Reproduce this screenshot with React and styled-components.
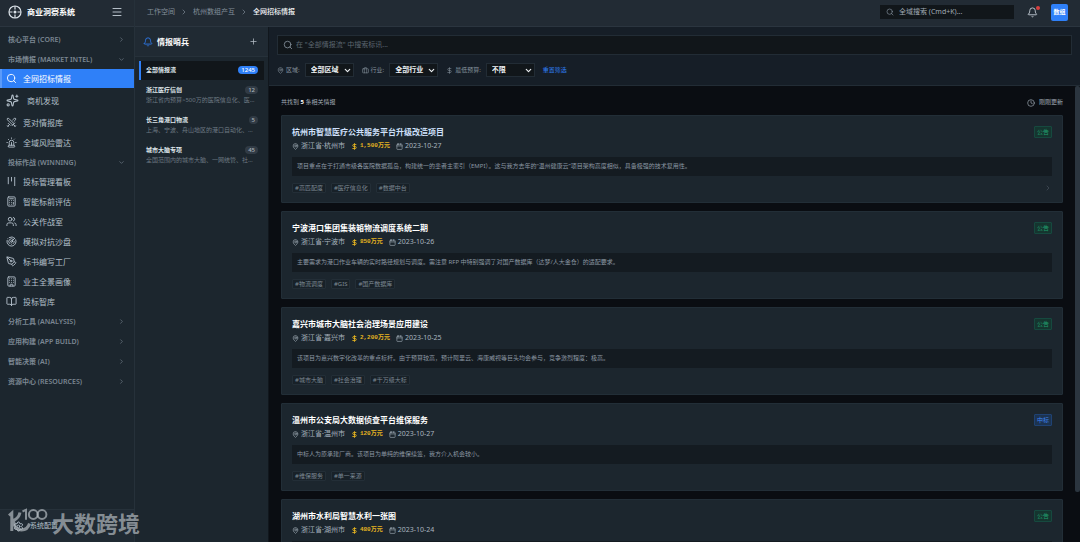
import { useState } from "react";
import styled, { createGlobalStyle, css } from "styled-components";
import {
  Bell,
  BookOpen,
  Briefcase,
  Building,
  Calculator,
  Calendar,
  ChevronDown,
  ChevronRight,
  Clock,
  DollarSign,
  Kanban,
  MapPin,
  Menu,
  PenTool,
  Plus,
  Radar,
  Search,
  Settings,
  Siren,
  Sparkles,
  Swords,
  Users,
} from "lucide-react";

const NAV = [
  { title: "核心平台 (CORE)" },
  {
    title: "市场情报 (MARKET INTEL)",
    items: [
      { label: "全网招标情报", icon: Search },
      { label: "商机发现", icon: Sparkles, large: true },
      { label: "竞对情报库", icon: Swords },
      { label: "全域风险雷达", icon: Siren },
    ],
  },
  {
    title: "投标作战 (WINNING)",
    items: [
      { label: "投标管理看板", icon: Kanban },
      { label: "智能标前评估", icon: Calculator },
      { label: "公关作战室", icon: Users },
      { label: "模拟对抗沙盘", icon: Radar },
      { label: "标书编写工厂", icon: PenTool },
      { label: "业主全景画像", icon: Building },
      { label: "投标智库", icon: BookOpen },
    ],
  },
  { title: "分析工具 (ANALYSIS)" },
  { title: "应用构建 (APP BUILD)" },
  { title: "智能决策 (AI)" },
  { title: "资源中心 (RESOURCES)" },
];

const FEEDS = [
  { name: "全部情报流", count: 1245 },
  { name: "浙江医疗信创", count: 12, desc: "浙江省内预算>500万的医院信息化、医疗信创项目" },
  { name: "长三角港口物流", count: 5, desc: "上海、宁波、舟山地区的港口自动化、物流调度" },
  { name: "城市大脑专项", count: 45, desc: "全国范围内的城市大脑、一网统管、社会治理" },
];

const BIDS = [
  {
    title: "杭州市智慧医疗公共服务平台升级改造项目",
    place: "浙江省·杭州市",
    price: "1,500万元",
    date: "2023-10-27",
    kind: "公告",
    hot: true,
    summary:
      "项目重点在于打通市级各医院数据孤岛，构建统一的患者主索引（EMPI）。这与我方去年的“温州健康云”项目架构高度相似，具备极强的技术复用性。",
    tags: ["#高匹配度", "#医疗信息化", "#数据中台"],
  },
  {
    title: "宁波港口集团集装箱物流调度系统二期",
    place: "浙江省·宁波市",
    price: "850万元",
    date: "2023-10-26",
    kind: "公告",
    summary:
      "主要需求为港口作业车辆的实时路径规划与调度。需注意 RFP 中特别强调了对国产数据库（达梦/人大金仓）的适配要求。",
    tags: ["#物流调度", "#GIS", "#国产数据库"],
  },
  {
    title: "嘉兴市城市大脑社会治理场景应用建设",
    place: "浙江省·嘉兴市",
    price: "2,200万元",
    date: "2023-10-25",
    kind: "公告",
    summary:
      "该项目为嘉兴数字化改革的重点标杆。由于预算较高，预计阿里云、海康威视等巨头均会参与，竞争激烈程度：极高。",
    tags: ["#城市大脑", "#社会治理", "#千万级大标"],
  },
  {
    title: "温州市公安局大数据侦查平台维保服务",
    place: "浙江省·温州市",
    price: "120万元",
    date: "2023-10-27",
    kind: "中标",
    summary: "中标人为原承建厂商。该项目为单纯的维保续签，我方介入机会较小。",
    tags: ["#维保服务", "#单一来源"],
  },
  {
    title: "湖州市水利局智慧水利一张图",
    place: "浙江省·湖州市",
    price: "480万元",
    date: "2023-10-24",
    kind: "公告",
    summary: "建设全市水利一张图平台，整合水文监测与防汛调度数据。",
    tags: ["#智慧水利", "#一张图"],
  },
];

const App = () => {
  const [page, setPage] = useState("全网招标情报");
  const [feed, setFeed] = useState("全部情报流");

  return (
    <Shell>
      <GlobalStyle />
      <Sidebar>
        <Brand>
          <Logo />
          <h1>商业洞察系统</h1>
          <IconButton aria-label="菜单">
            <Menu size={12} />
          </IconButton>
        </Brand>
        <Nav>
          {NAV.map((group) => (
            <section key={group.title}>
              <GroupButton aria-expanded={!!group.items}>
                {group.title}
                {group.items ? <ChevronDown size={7} /> : <ChevronRight size={7} />}
              </GroupButton>
              {group.items && (
                <NavList>
                  {group.items.map(({ label, icon: Icon, large }) => (
                    <NavItem
                      key={label}
                      $active={page === label}
                      $large={large}
                      onClick={() => setPage(label)}
                    >
                      <Icon size={large ? 13 : 11} strokeWidth={2} />
                      {label}
                    </NavItem>
                  ))}
                </NavList>
              )}
            </section>
          ))}
        </Nav>
        <SidebarFooter>
          <Settings size={11} />
          系统配置
        </SidebarFooter>
      </Sidebar>

      <Body>
        <Header>
          <Crumbs>
            <a href="#space">工作空间</a>
            <ChevronRight size={8} />
            <a href="#org">杭州数组产互</a>
            <ChevronRight size={8} />
            <strong>全网招标情报</strong>
          </Crumbs>
          <GlobalSearch>
            <Search size={8} />
            <input aria-label="全域搜索" placeholder="全域搜索 (Cmd+K)..." />
          </GlobalSearch>
          <BellButton aria-label="通知">
            <Bell size={11} />
            <Dot />
          </BellButton>
          <Avatar>数组</Avatar>
        </Header>

        <Columns>
          <FeedPanel>
            <FeedHeader>
              <Bell size={10} />
              <h2>情报哨兵</h2>
              <IconButton aria-label="新增">
                <Plus size={9} />
              </IconButton>
            </FeedHeader>
            <FeedList>
              {FEEDS.map((f) => (
                <FeedItem key={f.name} $active={feed === f.name} onClick={() => setFeed(f.name)}>
                  <FeedTop>
                    {f.name}
                    <Count $active={feed === f.name}>{f.count}</Count>
                  </FeedTop>
                  {f.desc && <FeedDesc>{f.desc}</FeedDesc>}
                </FeedItem>
              ))}
            </FeedList>
          </FeedPanel>

          <Main>
            <Toolbar>
              <SearchBox>
                <Search size={10} />
                <input aria-label="搜索标讯" placeholder={'在 "全部情报流" 中搜索标讯...'} />
              </SearchBox>
              <Filters>
                <Filter>
                  <MapPin size={7} />
                  区域:
                  <Select options={["全部区域", "浙江省", "上海市"]} />
                </Filter>
                <Filter>
                  <Briefcase size={7} />
                  行业:
                  <Select options={["全部行业", "医疗", "政务"]} />
                </Filter>
                <Filter>
                  <DollarSign size={7} />
                  最低预算:
                  <Select options={["不限", "100万", "500万"]} />
                </Filter>
                <ResetButton>重置筛选</ResetButton>
              </Filters>
            </Toolbar>

            <Results>
              <ResultsInner>
                <Summary>
                  <span>
                    共找到 <b>5</b> 条相关情报
                  </span>
                  <Updated>
                    <Clock size={8} />
                    刚刚更新
                  </Updated>
                </Summary>
                {BIDS.map((bid) => (
                  <BidCard key={bid.title} bid={bid} />
                ))}
              </ResultsInner>
              <Scrollbar />
            </Results>
          </Main>
        </Columns>
      </Body>
      <Watermark />
    </Shell>
  );
};

export default App;

const Select = ({ options }) => (
  <SelectBox>
    <select>
      {options.map((o) => (
        <option key={o}>{o}</option>
      ))}
    </select>
    <ChevronDown size={9} strokeWidth={3} />
  </SelectBox>
);

const BidCard = ({ bid }) => (
  <Card>
    <CardTop>
      <CardTitle $hot={bid.hot}>{bid.title}</CardTitle>
      <Kind $won={bid.kind === "中标"}>{bid.kind}</Kind>
    </CardTop>
    <Meta>
      <span>
        <MapPin size={7} />
        {bid.place}
      </span>
      <Price>
        <DollarSign size={7} strokeWidth={3} />
        {bid.price}
      </Price>
      <span>
        <Calendar size={7} />
        {bid.date}
      </span>
    </Meta>
    <Excerpt>{bid.summary}</Excerpt>
    <Tags>
      {bid.tags.map((t) => (
        <Tag key={t}>{t}</Tag>
      ))}
      {bid.hot && <ChevronRight size={8} />}
    </Tags>
  </Card>
);

const Logo = () => (
  <svg width="14" height="14" viewBox="0 0 28 28" fill="none" stroke="#dbe2e8" strokeWidth="2.4">
    <circle cx="14" cy="14" r="12" />
    <path d="M14 2v7M14 19v7M2 14h7M19 14h7" />
    <circle cx="14" cy="14" r="3" fill="#dbe2e8" stroke="none" />
  </svg>
);

const Watermark = () => (
  <WatermarkBox>
    <svg width="40" height="30" viewBox="0 0 40 30" fill="none" stroke="currentColor">
      <path
        d="M1 7.5L3.8 5v18M12 4.5C11 9 9 11 5.5 12.5C6 19 9 22 13.5 22C18 22 20.5 19 21.5 15.5"
        strokeWidth="3"
      />
      <path d="M14.5 3.5L18 1.8v10" strokeWidth="2" />
      <circle cx="25.3" cy="6.5" r="4.4" strokeWidth="2" />
      <circle cx="34" cy="6.5" r="4.4" strokeWidth="2" />
    </svg>
    大数跨境
  </WatermarkBox>
);

const GlobalStyle = createGlobalStyle`
  * {
    box-sizing: border-box;
  }

  body {
    margin: 0;
    background: #0a0d12;
    color: #c3ccd4;
    font-family: "Noto Sans", "Noto Sans CJK SC", sans-serif;
    font-size: 7px;
    line-height: 10px;
  }

  h1, h2, h3, p {
    margin: 0;
  }

  button, input, select {
    font: inherit;
    color: inherit;
    border: 0;
    padding: 0;
    background: none;
  }

  button {
    cursor: pointer;
  }

  input {
    outline: none;
  }

  svg {
    display: block;
    flex-shrink: 0;
  }
`;

const Shell = styled.div`
  display: flex;
  height: 100vh;
  overflow: hidden;
`;

const Sidebar = styled.aside`
  display: flex;
  flex-direction: column;
  width: 135px;
  flex-shrink: 0;
  background: #1c262e;
  border-right: 1px solid #26313a;
`;

const Brand = styled.div`
  display: flex;
  align-items: center;
  gap: 5px;
  height: 27px;
  padding: 0 11px 2px 8px;
  background: #222b34;
  border-bottom: 1px solid #2b353f;

  h1 {
    flex: 1;
    font-size: 8px;
    color: #fff;
  }
`;

const IconButton = styled.button`
  display: flex;
  color: #b4bec7;
`;

const Nav = styled.nav`
  display: flex;
  flex-direction: column;
  flex: 1;
  gap: 1px;
  padding-top: 3px;
  overflow: hidden;
`;

const GroupButton = styled.button`
  display: flex;
  align-items: center;
  justify-content: space-between;
  width: 100%;
  height: 19px;
  padding: 0 9px 0 8px;
  font-weight: 600;
  color: #7b8792;
`;

const NavList = styled.div`
  display: flex;
  flex-direction: column;
  gap: 1px;
`;

const NavItem = styled.button`
  display: flex;
  align-items: center;
  gap: 6px;
  height: 19px;
  padding: 0 6px;
  font-size: 8px;
  color: #b4c0ca;

  ${({ $large }) =>
    $large &&
    css`
      height: 23px;
      gap: 8px;
    `}

  ${({ $active }) =>
    $active &&
    css`
      color: #fff;
      background: #2f80f8;
      box-shadow: inset 2px 0 #5b9bfa;
    `}
`;

const SidebarFooter = styled.button`
  display: flex;
  align-items: center;
  gap: 6px;
  height: 33px;
  padding: 0 13px;
  color: #b4c0ca;
  background: #202a33;
  border-top: 1px solid #26313a;
`;

const Body = styled.div`
  display: flex;
  flex-direction: column;
  flex: 1;
  min-width: 0;
`;

const Header = styled.header`
  display: flex;
  align-items: center;
  height: 27px;
  padding: 0 12px 2px;
  background: #222b34;
  border-bottom: 1px solid #2b353f;
`;

const Crumbs = styled.nav`
  display: flex;
  align-items: center;
  gap: 5px;
  flex: 1;
  color: #84909b;

  a {
    color: inherit;
    text-decoration: none;
  }

  strong {
    font-weight: 500;
    color: #f2f5f7;
  }
`;

const GlobalSearch = styled.label`
  display: flex;
  align-items: center;
  gap: 5px;
  width: 134px;
  height: 14px;
  padding: 0 6px;
  color: #84909b;
  background: #11161a;

  input {
    flex: 1;
    min-width: 0;
  }

  input::placeholder {
    color: #a0abb5;
  }
`;

const BellButton = styled.button`
  position: relative;
  display: flex;
  margin: 0 13px;
  color: #c3ccd4;
`;

const Dot = styled.span`
  position: absolute;
  top: -1px;
  right: -2px;
  width: 4px;
  height: 4px;
  border-radius: 50%;
  background: #d8403f;
`;

const Avatar = styled.button`
  width: 17px;
  height: 17px;
  border-radius: 2px;
  background: #2f80f8;
  color: #fff;
  font-size: 6px;
  font-weight: 700;
`;

const Columns = styled.div`
  display: flex;
  flex: 1;
  min-height: 0;
`;

const FeedPanel = styled.aside`
  width: 134px;
  flex-shrink: 0;
  background: #1c262e;
  border-right: 1px solid #11171d;
`;

const FeedHeader = styled.div`
  display: flex;
  align-items: center;
  gap: 4px;
  height: 30px;
  padding: 0 10px 0 8px;
  color: #2f80f8;
  background: #202a33;
  border-bottom: 1px solid #26313a;

  h2 {
    flex: 1;
    font-size: 8px;
    color: #fff;
  }
`;

const FeedList = styled.div`
  display: flex;
  flex-direction: column;
  gap: 1px;
  padding: 4px;
`;

const FeedItem = styled.button`
  padding: 4px 6px 5px 5px;
  text-align: left;
  border-left: 2px solid transparent;

  ${({ $active }) =>
    $active &&
    css`
      background: #11161a;
      border-color: #2f80f8;
    `}
`;

const FeedTop = styled.div`
  display: flex;
  align-items: center;
  justify-content: space-between;
  font-size: 6px;
  font-weight: 700;
  color: #dfe5ea;
`;

const Count = styled.span`
  padding: 0 3px;
  border-radius: 4px;
  font-size: 6px;
  line-height: 8px;
  font-weight: 500;
  color: ${({ $active }) => ($active ? "#fff" : "#aab4bd")};
  background: ${({ $active }) => ($active ? "#2f80f8" : "#313b45")};
`;

const FeedDesc = styled.div`
  overflow: hidden;
  white-space: nowrap;
  text-overflow: ellipsis;
  font-size: 6px;
  color: #6d7983;
`;

const Main = styled.main`
  display: flex;
  flex-direction: column;
  flex: 1;
  min-width: 0;
`;

const Toolbar = styled.div`
  display: flex;
  flex-direction: column;
  gap: 8px;
  padding: 8px;
  background: #161e27;
  border-bottom: 1px solid #222c35;
`;

const SearchBox = styled.label`
  display: flex;
  align-items: center;
  gap: 3px;
  height: 20px;
  padding: 0 5px;
  color: #84909b;
  background: #11161a;
  border: 1px solid #222c35;

  input {
    flex: 1;
  }

  input::placeholder {
    color: #5c6670;
  }
`;

const Filters = styled.div`
  display: flex;
  align-items: center;
  gap: 8px;
`;

const Filter = styled.label`
  display: flex;
  align-items: center;
  gap: 2px;
  font-size: 6px;
  color: #84909b;
`;

const SelectBox = styled.span`
  display: flex;
  align-items: center;
  margin-left: 3px;
  padding-right: 1px;
  color: #eef2f5;
  background: #11161a;
  border: 1px solid #222c35;

  select {
    appearance: none;
    width: 48px;
    height: 12px;
    margin-right: -11px;
    padding-left: 5px;
    font-size: 7px;
    font-weight: 600;
    outline: none;
  }

  svg {
    pointer-events: none;
  }
`;

const ResetButton = styled.button`
  font-size: 6px;
  color: #2f80f8;
`;

const Results = styled.div`
  display: flex;
  flex: 1;
  min-height: 0;
  overflow: hidden;
`;

const ResultsInner = styled.div`
  display: flex;
  flex-direction: column;
  flex: 1;
  gap: 8px;
  min-width: 0;
  padding: 12px 12px 0;
`;

const Scrollbar = styled.div`
  width: 5px;
  height: 89%;
  border-radius: 2px;
  background: #2b353f;
`;

const Summary = styled.div`
  display: flex;
  justify-content: space-between;
  color: #a0abb5;
  font-size: 6px;
  line-height: 9px;

  b {
    color: #fff;
  }
`;

const Updated = styled.span`
  display: flex;
  align-items: center;
  gap: 4px;
`;

const Card = styled.article`
  flex-shrink: 0;
  padding: 10px 10px 9px;
  background: #1c262e;
  border: 1px solid #222e37;
  border-radius: 1px;
`;

const CardTop = styled.div`
  display: flex;
  align-items: center;
  justify-content: space-between;
  height: 12px;
`;

const CardTitle = styled.h3`
  font-size: 8px;
  color: ${({ $hot }) => ($hot ? "#cfe0fb" : "#fff")};
`;

const Kind = styled.span`
  padding: 0 2px;
  font-size: 6px;
  border: 1px solid ${({ $won }) => ($won ? "#1f4273" : "#16493f")};
  border-radius: 1px;
  color: ${({ $won }) => ($won ? "#3d86f0" : "#20a070")};
  background: ${({ $won }) => ($won ? "#1c3350" : "#15352f")};
`;

const Meta = styled.div`
  display: flex;
  gap: 6px;
  margin-top: 3px;
  color: #a9b5bf;

  span {
    display: flex;
    align-items: center;
    gap: 2px;
  }
`;

const Price = styled.span`
  font-family: "Liberation Mono", "Noto Sans CJK SC", monospace;
  font-size: 6px;
  font-weight: 700;
  color: #e5b421;
`;

const Excerpt = styled.p`
  margin-top: 6px;
  padding: 4px 5px;
  font-size: 6px;
  line-height: 11px;
  color: #8b97a1;
  background: #141b21;
`;

const Tags = styled.div`
  display: flex;
  align-items: center;
  gap: 5px;
  margin-top: 7px;
  color: #4a555f;

  svg {
    margin-left: auto;
  }
`;

const Tag = styled.span`
  padding: 0 2px;
  font-size: 6px;
  line-height: 8px;
  color: #7c8893;
  background: #182128;
  border: 1px solid #232e37;
  border-radius: 1px;
`;

const WatermarkBox = styled.div`
  position: absolute;
  left: 8px;
  bottom: 4px;
  display: flex;
  align-items: center;
  gap: 4px;
  font-size: 22px;
  line-height: 30px;
  font-weight: 700;
  color: rgba(180, 186, 192, 0.7);
  pointer-events: none;
`;
